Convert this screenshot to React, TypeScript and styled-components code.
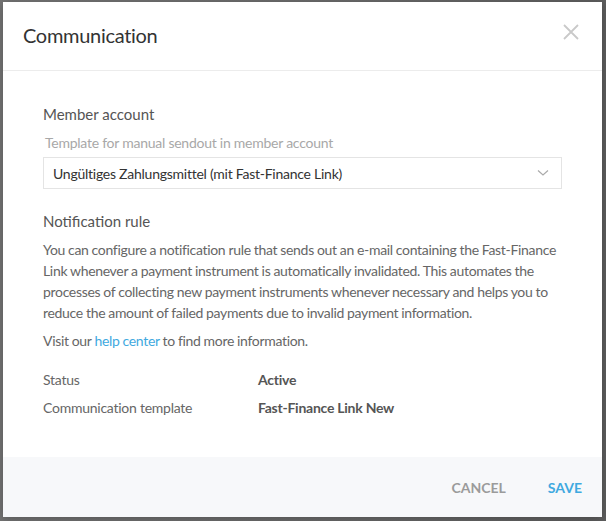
import React from "react";
import styled, { createGlobalStyle } from "styled-components";

const Global = createGlobalStyle`
  html, body { margin: 0; padding: 0; }
  body {
    width: 606px;
    height: 521px;
    overflow: hidden;
    font-family: Lato, "Noto Sans", sans-serif;
    background: #6c6c6c;
  }
`;

const Backdrop = styled.div`
  width: 606px;
  height: 521px;
  box-sizing: border-box;
  padding: 2px 0 0 3px;
  background: linear-gradient(90deg, #747474 0%, #6a6a6a 60%, #5e5e5e 100%);
`;

const Modal = styled.div`
  width: 599px;
  height: 515px;
  background: #fff;
  display: flex;
  flex-direction: column;
  box-shadow: 0 2px 10px rgba(0, 0, 0, 0.25);
`;

const Header = styled.div`
  height: 68px;
  flex: none;
  display: flex;
  align-items: center;
  justify-content: space-between;
  padding: 0 23px 0 20px;
  border-bottom: 1px solid #ececec;
`;

const Title = styled.h1`
  margin: 0;
  font-size: 20px;
  font-weight: 400;
  letter-spacing: -0.3px;
  color: #333;
  line-height: 24px;
  margin-top: -2px;
`;

const Close = styled.button`
  border: 0;
  background: none;
  padding: 0;
  width: 16px;
  height: 16px;
  margin-top: -8px;
  display: flex;
  cursor: pointer;
`;

const Body = styled.div`
  flex: 1;
  padding: 33px 40px 0 40px;
  display: flex;
  flex-direction: column;
  letter-spacing: -0.25px;
`;

const SectionTitle = styled.h2<{ $top?: number }>`
  margin: ${(p) => p.$top ?? 0}px 0 0 0;
  font-size: 15px;
  line-height: 20px;
  font-weight: 400;
  letter-spacing: 0;
  color: #555;
`;

const FieldLabel = styled.label`
  display: block;
  margin: 9px 0 4px 2px;
  font-size: 14px;
  line-height: 20px;
  color: #a8a8a8;
`;

const Select = styled.div`
  height: 32px;
  box-sizing: border-box;
  border: 1px solid #e4e4e4;
  display: flex;
  align-items: center;
  justify-content: space-between;
  padding: 0 12px 0 9px;
  font-size: 14px;
  color: #333;
`;

const Paragraph = styled.p<{ $top: number }>`
  margin: ${(p) => p.$top}px 0 0 0;
  font-size: 14px;
  line-height: 21px;
  letter-spacing: -0.32px;
  word-spacing: -0.2px;
  color: #666;
`;

const Link = styled.a`
  color: #3fa9e0;
  text-decoration: none;
`;

const InfoGrid = styled.div`
  margin-top: 18px;
  display: grid;
  grid-template-columns: 215px 1fr;
  row-gap: 7px;
  font-size: 14px;
  line-height: 21px;
`;

const InfoLabel = styled.div`
  color: #666;
`;

const InfoValue = styled.div`
  color: #555;
  font-weight: 700;
`;

const Footer = styled.div`
  height: 60px;
  flex: none;
  background: #f7f8fa;
  display: flex;
  align-items: center;
  justify-content: flex-end;
  gap: 42px;
  padding: 0 20px 0 0;
`;

const FooterButton = styled.button<{ $primary?: boolean }>`
  border: 0;
  background: none;
  padding: 0;
  font-family: Lato, "Noto Sans", sans-serif;
  font-size: 14px;
  font-weight: 700;
  color: ${(p) => (p.$primary ? "#3fa9e0" : "#9b9b9b")};
  cursor: pointer;
`;

export default function App() {
  return (
    <>
      <Global />
      <Backdrop>
        <Modal>
          <Header>
            <Title>Communication</Title>
            <Close aria-label="Close">
              <svg width="16" height="16" viewBox="0 0 16 16">
                <path d="M1 1 L15 15 M15 1 L1 15" stroke="#c9c9c9" strokeWidth="1.8" />
              </svg>
            </Close>
          </Header>
          <Body>
            <SectionTitle>Member account</SectionTitle>
            <FieldLabel>Template for manual sendout in member account</FieldLabel>
            <Select>
              <span>Ungültiges Zahlungsmittel (mit Fast-Finance Link)</span>
              <svg width="12" height="8" viewBox="0 0 12 8">
                <path d="M1 1.5 L6 6 L11 1.5" fill="none" stroke="#aaa" strokeWidth="1.2" />
              </svg>
            </Select>
            <SectionTitle $top={22}>Notification rule</SectionTitle>
            <Paragraph $top={8}>
              You can configure a notification rule that sends out an e-mail containing the Fast&#8209;Finance
              Link whenever a payment instrument is automatically invalidated. This automates the
              processes of collecting new payment instruments whenever necessary and helps you to
              reduce the amount of failed payments due to invalid payment information.
            </Paragraph>
            <Paragraph $top={7}>
              Visit our <Link href="#">help center</Link> to find more information.
            </Paragraph>
            <InfoGrid>
              <InfoLabel>Status</InfoLabel>
              <InfoValue>Active</InfoValue>
              <InfoLabel>Communication template</InfoLabel>
              <InfoValue>Fast-Finance Link New</InfoValue>
            </InfoGrid>
          </Body>
          <Footer>
            <FooterButton>CANCEL</FooterButton>
            <FooterButton $primary>SAVE</FooterButton>
          </Footer>
        </Modal>
      </Backdrop>
    </>
  );
}
